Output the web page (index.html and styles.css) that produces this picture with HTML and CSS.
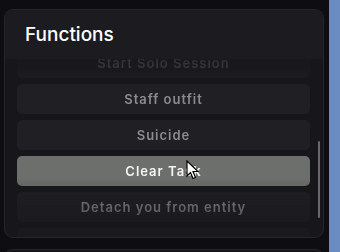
FILE: index.html
```html
<!DOCTYPE html>
<html>
<head>
<meta charset="utf-8">
<link rel="stylesheet" href="styles.css">
</head>
<body>
<div class="screen">
  <div class="column">
    <section class="panel">
      <header class="panel-head">Functions</header>
      <div class="scroll">
        <div class="list">
          <button class="item">Start Solo Session</button>
          <button class="item">Staff outfit</button>
          <button class="item">Suicide</button>
          <button class="item active">Clear Task</button>
          <button class="item">Detach you from entity</button>
          <button class="item">&nbsp;</button>
        </div>
        <div class="thumb"></div>
      </div>
    </section>
    <section class="panel next"></section>
  </div>
  <div class="side"></div>
</div>
<svg class="cursor" width="13" height="20" viewBox="0 0 13 20">
  <path d="M1 1 L1 16 L4.5 12.5 L7 18.5 L9.5 17.5 L7 11.5 L12 11.5 Z" fill="#fff" stroke="#000" stroke-width="1.2" stroke-linejoin="miter"/>
</svg>
</body>
</html>
```

FILE: styles.css
```css
html, body {
  margin: 0;
  padding: 0;
  background: #0e0e12;
  font-family: "Inter", "Noto Sans", sans-serif;
  overflow: hidden;
}
.screen {
  display: flex;
  width: 340px;
  height: 252px;
}
.column {
  width: 329px;
  padding: 9px 5px 0 4px;
  box-sizing: border-box;
  display: flex;
  flex-direction: column;
  gap: 11px;
}
.side {
  width: 11px;
  background: #6b8bc3;
}
.panel {
  width: 320px;
  height: 229px;
  box-sizing: border-box;
  border: 1px solid #25252b;
  border-radius: 9px;
  background: #17171b;
  overflow: hidden;
  display: flex;
  flex-direction: column;
  flex-shrink: 0;
}
.panel.next {
  height: 40px;
}
.panel-head {
  height: 49px;
  flex-shrink: 0;
  background: #1c1b20;
  color: #ffffff;
  font-size: 19px;
  font-weight: 500;
  display: flex;
  align-items: center;
  padding-left: 20px;
  position: relative;
  z-index: 1;
}
.scroll {
  position: relative;
  flex: 1;
  overflow: hidden;
}
.list {
  display: flex;
  flex-direction: column;
  gap: 6px;
  padding: 0 13px 0 12px;
  margin-top: -11px;
  -webkit-mask-image: linear-gradient(to bottom, rgba(0,0,0,0.12) 0px, rgba(0,0,0,0.3) 22px, rgba(0,0,0,1) 36px, rgba(0,0,0,1) 130px, rgba(0,0,0,0.6) 165px, rgba(0,0,0,0.3) 190px);
  mask-image: linear-gradient(to bottom, rgba(0,0,0,0.12) 0px, rgba(0,0,0,0.3) 22px, rgba(0,0,0,1) 36px, rgba(0,0,0,1) 130px, rgba(0,0,0,0.6) 165px, rgba(0,0,0,0.3) 190px);
}
.item {
  height: 30px;
  width: 293px;
  flex-shrink: 0;
  border: none;
  border-radius: 5px;
  background: #1f1f24;
  color: #8b8b90;
  font-family: inherit;
  font-size: 13px;
  font-weight: 600;
  letter-spacing: 1px;
  padding: 0;
  text-align: center;
}
.item.active {
  background: #6d6f6c;
  color: #f4f4f4;
}
.thumb {
  position: absolute;
  right: 3px;
  top: 82px;
  width: 2px;
  height: 77px;
  border-radius: 1px;
  background: #68686c;
}
.cursor {
  position: absolute;
  left: 186px;
  top: 160px;
}
```
